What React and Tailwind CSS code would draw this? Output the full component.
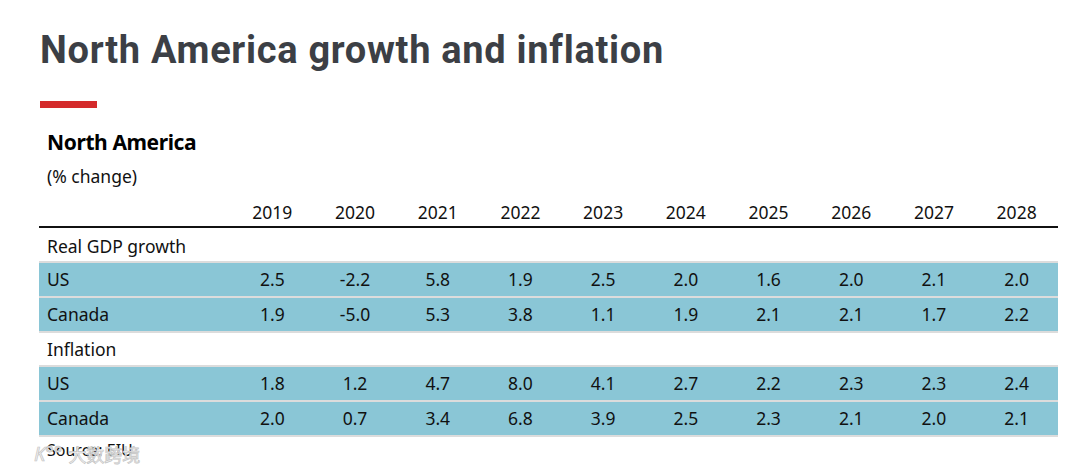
import React from "react";

const years = ["2019","2020","2021","2022","2023","2024","2025","2026","2027","2028"];
const gdp = [
  ["US", ["2.5","-2.2","5.8","1.9","2.5","2.0","1.6","2.0","2.1","2.0"]],
  ["Canada", ["1.9","-5.0","5.3","3.8","1.1","1.9","2.1","2.1","1.7","2.2"]],
];
const infl = [
  ["US", ["1.8","1.2","4.7","8.0","4.1","2.7","2.2","2.3","2.3","2.4"]],
  ["Canada", ["2.0","0.7","3.4","6.8","3.9","2.5","2.3","2.1","2.0","2.1"]],
];

const grid = "grid grid-cols-[192px_repeat(10,minmax(0,1fr))] items-center";

function DataGroup({ rows }) {
  return (
    <div className="border-y-2 border-[#dcdcdc] bg-[#dcdcdc] flex flex-col gap-[2px]">
      {rows.map(([name, vals]) => (
        <div key={name} className={`${grid} h-[33px] bg-[#8ac6d6]`}>
          <div className="pl-[8px]">{name}</div>
          {vals.map((v, i) => (
            <div key={i} className="text-center">{v}</div>
          ))}
        </div>
      ))}
    </div>
  );
}

export default function App() {
  return (
    <div className="relative w-[1080px] h-[474px] bg-white overflow-hidden">
      <div className="pl-[39px]">
        <div
          className="pt-[26px] pl-px text-[38px] leading-[48px] font-bold text-[#3c3f45] tracking-[0.7px] whitespace-nowrap"
          style={{ fontFamily: 'Roboto, sans-serif' }}
        >
          North America growth and inflation
        </div>
        <div className="mt-[27px] ml-px w-[57px] h-[7px] bg-[#d42a2b]" />
        <div
          className="w-[1019px] text-[#111111]"
          style={{ fontFamily: '"Noto Sans", "Open Sans", sans-serif' }}
        >
          <div className="mt-[19px] pl-[8px] text-[21px] leading-[30px] font-bold text-black tracking-[-0.4px]">
            North America
          </div>
          <div className="mt-[6px] pl-[8px] text-[17.5px] leading-[26px]">(% change)</div>
          <div className={`${grid} mt-[9px] h-[28px] text-[17.5px] border-b-2 border-[#111] box-content`}>
            <div />
            {years.map((y) => (
              <div key={y} className="text-center">{y}</div>
            ))}
          </div>
          <div className="text-[17.5px]">
            <div className="h-[33px] pl-[8px] flex items-center pt-[3px]">Real GDP growth</div>
            <DataGroup rows={gdp} />
            <div className="h-[32px] pl-[8px] flex items-center pt-[1px]">Inflation</div>
            <DataGroup rows={infl} />
            <div className="h-[26px] pl-[8px] flex items-center text-[16px]">Source: EIU</div>
          </div>
        </div>
      </div>
      <div
        className="absolute left-[34px] top-[441px] flex items-center gap-[2px] leading-[26px] text-[#f2f2f2]"
        style={{ fontFamily: '"Noto Sans CJK SC", sans-serif', WebkitTextStroke: "0.7px #c4c4c4" }}
      >
        <span className="text-[20px] italic" style={{ fontFamily: '"Noto Sans", sans-serif' }}>K°°</span>
        <span className="ml-[4px] text-[18px]">大数跨境</span>
      </div>
    </div>
  );
}
